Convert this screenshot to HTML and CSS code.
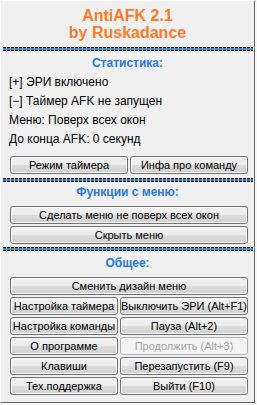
FILE: index.html
```html
<!DOCTYPE html>
<html lang="ru">
  <head>
    <meta charset="UTF-8" />
    <title>AntiAFK 2.1</title>
    <link rel="stylesheet" href="styles.css">
  </head>
  <body>
    <div class="window">
      <header class="title">AntiAFK 2.1<br>by Ruskadance</header>
      <div class="sep"></div>

      <!-- Статистика -->
      <h2 class="heading first">Статистика:</h2>
      <p class="stat">[+] ЭРИ включено</p>
      <p class="stat">[&minus;] Таймер AFK не запущен</p>
      <p class="stat">Меню: Поверх всех окон</p>
      <p class="stat">До конца AFK: 0 секунд</p>
      <div class="buttons halves stats-buttons">
        <button class="btn">Режим таймера</button>
        <button class="btn">Инфа про команду</button>
      </div>
      <div class="sep sep-mid"></div>

      <!-- Функции с меню -->
      <h2 class="heading">Функции с меню:</h2>
      <div class="buttons menu-buttons">
        <button class="btn">Сделать меню не поверх всех окон</button>
        <button class="btn">Скрыть меню</button>
      </div>
      <div class="sep sep-low"></div>

      <!-- Общее -->
      <h2 class="heading general">Общее:</h2>
      <div class="buttons general-buttons">
        <button class="btn wide">Сменить дизайн меню</button>
        <button class="btn">Настройка таймера</button>
        <button class="btn">Выключить ЭРИ (Alt+F1)</button>
        <button class="btn">Настройка команды</button>
        <button class="btn">Пауза (Alt+2)</button>
        <button class="btn">О программе</button>
        <button class="btn" disabled>Продолжить (Alt+3)</button>
        <button class="btn">Клавиши</button>
        <button class="btn">Перезапустить (F9)</button>
        <button class="btn">Тех.поддержка</button>
        <button class="btn">Выйти (F10)</button>
      </div>
    </div>
  </body>
</html>
```

FILE: styles.css
```css
body {
  margin: 0;
  background-color: #f7f7f7;
  font-family: "Liberation Sans", Arial, sans-serif;
}
.window {
  box-sizing: border-box;
  width: 255px;
  height: 403px;
  background-color: #f0f0f0;
  border-top: 1px solid #ffffff;
  border-left: 1px solid #ffffff;
  border-right: 1px solid #646464;
  border-bottom: 1px solid #646464;
  padding-top: 6px;
}
.title {
  text-align: center;
  color: #fd7b27;
  font-weight: bold;
  font-size: 16px;
  line-height: 17px;
}
.sep {
  height: 4px;
  margin: 6px 1px 0 2px;
  background:
    repeating-linear-gradient(90deg, #111 0 3px, #f0f0f0 3px 4px) 0 0 / 100% 1px no-repeat,
    repeating-linear-gradient(90deg, #111 0 3px, #f0f0f0 3px 4px) 0 100% / 100% 1px no-repeat,
    repeating-linear-gradient(90deg, #2f86db 0 3px, #f39a3c 3px 4px);
}
.sep-mid {
  margin-top: 4px;
}
.sep-low {
  margin-top: 3px;
}
.heading {
  margin: 1px 0 0;
  text-align: center;
  color: #2a78d6;
  font-size: 12px;
  font-weight: bold;
  line-height: 19px;
}
.heading.first,
.heading.general {
  margin-top: 3px;
}
.stat {
  margin: 0;
  padding-left: 8px;
  font-size: 12px;
  line-height: 19px;
  color: #000;
}
.buttons {
  display: grid;
  gap: 2px;
  margin: 4px 6px 0 9px;
}
.stats-buttons {
  margin-top: 7px;
}
.halves {
  grid-template-columns: 1fr 1fr;
}
.general-buttons {
  grid-template-columns: 108px 1fr;
}
.btn {
  box-sizing: border-box;
  height: 18px;
  padding: 0;
  border: 1px solid #707070;
  border-radius: 3px;
  background: linear-gradient(#f2f2f2 0%, #ebebeb 50%, #dddddd 50%, #cfcfcf 100%);
  box-shadow: inset 0 0 0 1px #fbfbfb;
  font-family: "Liberation Sans", Arial, sans-serif;
  font-size: 11px;
  color: #000;
  white-space: nowrap;
}
.btn.wide {
  grid-column: 1 / -1;
}
.btn:disabled {
  border-color: #adb2b5;
  background: #f4f4f4;
  box-shadow: none;
  color: #a3a3a3;
}
```
